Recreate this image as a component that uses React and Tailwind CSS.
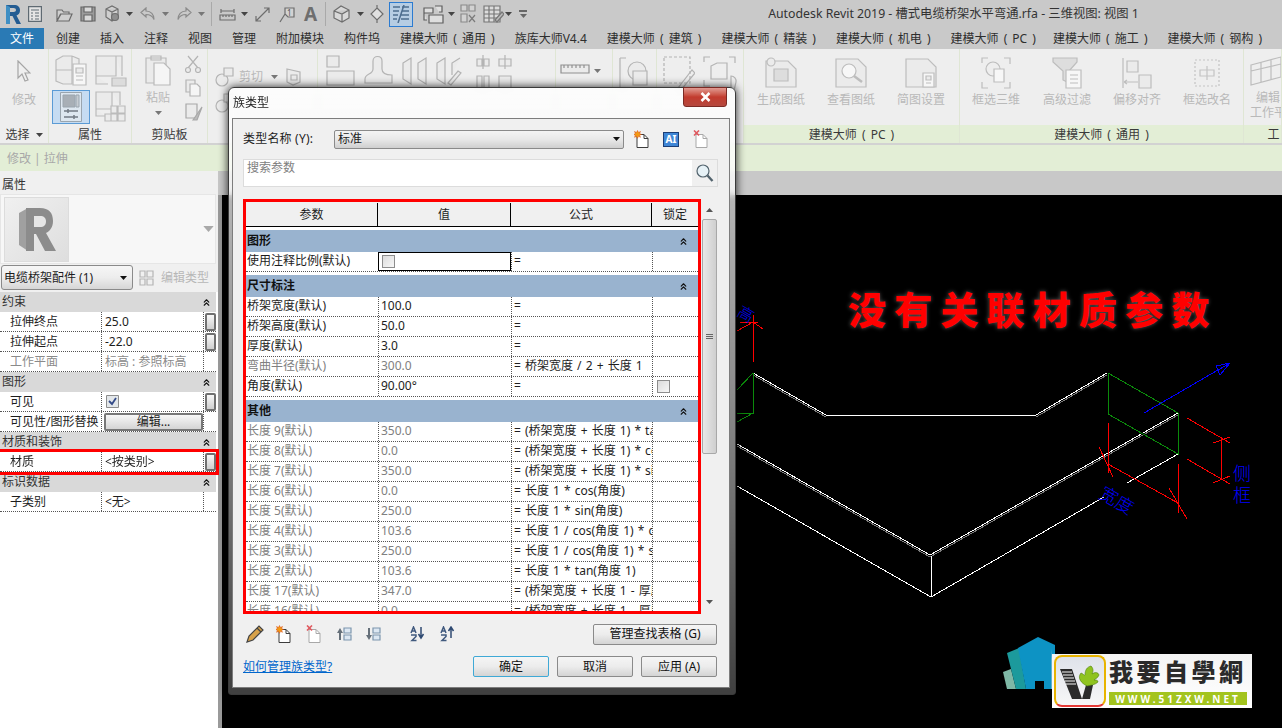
import { ChevronsUp } from "lucide-react"

const TABS = ["创建", "插入", "注释", "视图", "管理", "附加模块", "构件坞", "建模大师 ( 通用 )", "族库大师V4.4", "建模大师 ( 建筑 )", "建模大师 ( 精装 )", "建模大师 ( 机电 )", "建模大师 ( PC )", "建模大师 ( 施工 )", "建模大师 ( 钢构 )"]

const PROP_GROUPS = [
    { title: "约束", rows: [
        { name: "拉伸终点", value: "25.0", btn: true },
        { name: "拉伸起点", value: "-22.0", btn: true },
        { name: "工作平面", value: "标高 : 参照标高", dim: true },
    ] },
    { title: "图形", rows: [
        { name: "可见", check: true, btn: true },
        { name: "可见性/图形替换", edit: true },
    ] },
    { title: "材质和装饰", rows: [{ name: "材质", value: "<按类别>", btn: true, mark: true }] },
    { title: "标识数据", rows: [{ name: "子类别", value: "<无>" }] },
]

const PARAM_GROUPS = [
    { title: "图形", rows: [{ name: "使用注释比例(默认)", box: true, formula: "=" }] },
    { title: "尺寸标注", rows: [
        { name: "桥架宽度(默认)", value: "100.0", formula: "=" },
        { name: "桥架高度(默认)", value: "50.0", formula: "=" },
        { name: "厚度(默认)", value: "3.0", formula: "=" },
        { name: "弯曲半径(默认)", value: "300.0", formula: "= 桥架宽度 / 2 + 长度 1", dim: true },
        { name: "角度(默认)", value: "90.00°", formula: "=", lock: true },
    ] },
    { title: "其他", rows: [
        { name: "长度 9(默认)", value: "350.0", formula: "= (桥架宽度 + 长度 1) * tan(角度)", dim: true },
        { name: "长度 8(默认)", value: "0.0", formula: "= (桥架宽度 + 长度 1) * cos(角度)", dim: true },
        { name: "长度 7(默认)", value: "350.0", formula: "= (桥架宽度 + 长度 1) * sin(角度)", dim: true },
        { name: "长度 6(默认)", value: "0.0", formula: "= 长度 1 * cos(角度)", dim: true },
        { name: "长度 5(默认)", value: "250.0", formula: "= 长度 1 * sin(角度)", dim: true },
        { name: "长度 4(默认)", value: "103.6", formula: "= 长度 1 / cos(角度 1) * cos(角度)", dim: true },
        { name: "长度 3(默认)", value: "250.0", formula: "= 长度 1 / cos(角度 1) * sin(角度)", dim: true },
        { name: "长度 2(默认)", value: "103.6", formula: "= 长度 1 * tan(角度 1)", dim: true },
        { name: "长度 17(默认)", value: "347.0", formula: "= (桥架宽度 + 长度 1 - 厚度)", dim: true },
        { name: "长度 16(默认)", value: "0.0", formula: "= (桥架宽度 + 长度 1 - 厚度)", dim: true },
    ] },
]

function Ic({ w = 32, h = 32, className = "", children, stroke = "#b4b4b4", fill = "#ebebeb" }) {
    return (
        <svg width={w} height={h} viewBox={`0 0 ${w} ${h}`} fill={fill} stroke={stroke} strokeWidth="1.2" className={`shrink-0 ${className}`}>
            {children}
        </svg>
    )
}

function Caret({ color = "#777777", className = "" }) {
    return <svg width="7" height="4" viewBox="0 0 7 4" className={`shrink-0 ${className}`}><path d="M0 0h7L3.5 4z" fill={color} /></svg>
}

function PageIcon({ mark, muted }) {
    return (
        <svg width="16" height="18" viewBox="0 0 16 18" className="shrink-0">
            <path d="M3 4.5h7l4 4v9H3z" fill="#ffffff" stroke={muted ? "#a8a8a8" : "#3d3d3d"} />
            <path d="M10 4.5v4h4" fill="none" stroke={muted ? "#a8a8a8" : "#3d3d3d"} />
            {mark === "new" && <path d="M3.5 0.5l1 2 2-1-1 2 2 1-2 .8 1 2-2-1-1 2-1-2-2 1 1-2-2-.8 2-1-1-2 2 1z" fill="#f39a12" stroke="#d9480f" strokeWidth=".5" />}
            {mark === "del" && <path d="M1 0.5l5 5m0-5l-5 5" fill="none" stroke="#e0595f" strokeWidth="1.6" />}
        </svg>
    )
}

function Qat() {
    return (
        <div className="flex h-7 items-center pl-[5px]">
            <svg width="16" height="21" viewBox="0 0 16 21" className="shrink-0">
                <path d="M1 1h8c4 0 6 2 6 5.500 0 2.500-1.500 4.500-3.500 5L16 20h-4.500L7.500 12H5v8H1z" fill="#245c92" />
                <path d="M1 1l4 2v17H1z" fill="#3f8fc4" />
                <path d="M5 4v4h3.500c1.500 0 2.500-.8 2.500-2s-1-2-2.500-2z" fill="#c8c8c8" />
            </svg>
            <Ic w={14} h={16} className="ml-[7px]" stroke="#5f6a72" fill="#e4e4e4"><path d="M.6.6h12.800v14.800H.6zM3 4h8M3 7h2m2 0h4M3 10h2m2 0h4M3 13h2m2 0h4" /></Ic>
            <Ic w={17} h={15} className="ml-[14px]" stroke="#6b6b6b" fill="#cfcfcf"><path d="M1 3h5l1.500 2H13v2H5L1 14zM1 14l3.500-7H16l-3 7z" /></Ic>
            <Ic w={16} h={16} className="ml-[7px]" stroke="#666666" fill="#9b9b9b"><path d="M1 1h14v14H1z" /><path d="M4 1h8v5H4zM4 9h8v6H4z" fill="#d9d9d9" /></Ic>
            <Ic w={18} h={18} className="ml-[7px]" stroke="#6f6f6f" fill="#cfcfcf"><path d="M3 4l6-3 6 3v8l-6 4-6-4zM3 4l6 3 6-3M9 7v9" /><circle cx="12" cy="12" r="3.500" fill="#8f8f8f" /></Ic>
            <Caret color="#444444" className="ml-[5px]" />
            <Ic w={16} h={14} className="ml-[7px]" stroke="#8b8b8b" fill="none"><path d="M6 1L1 5.500 6 10V7.500c4 0 6.500 1.500 8 5 0-5-3-8.500-8-8.500z" /></Ic>
            <Caret color="#777777" className="ml-[6px]" />
            <Ic w={16} h={14} className="ml-[7px]" stroke="#8b8b8b" fill="none"><path d="M10 1l5 4.500L10 10V7.500c-4 0-6.500 1.500-8 5 0-5 3-8.500 8-8.500z" /></Ic>
            <Caret color="#777777" className="ml-[6px]" />
            <div className="ml-[6px] h-6 w-px bg-[#a9a9a9]" />
            <Ic w={17} h={13} className="ml-[7px]" stroke="#6d6d6d" fill="none"><path d="M2 1v4M15 1v4M2 3h13M1 7h15v5H1zM4 7v2M7 7v2M10 7v2M13 7v2" /></Ic>
            <Caret color="#444444" className="ml-[5px]" />
            <Ic w={15} h={15} className="ml-[7px]" stroke="#6d6d6d" fill="none"><path d="M1 14L14 1M9 1h5v5M1 9v5h5" /></Ic>
            <Ic w={17} h={17} className="ml-[9px]" stroke="#6d6d6d" fill="#d2d2d2"><path d="M6 2h9v9H9l-3-3zM1 16l5-8" /><text x="8" y="10" fontSize="8" fill="#555555" stroke="none">1</text></Ic>
            <span className="ml-[8px] text-[19px] leading-none font-bold text-[#6e6e6e]">A</span>
            <div className="ml-[8px] h-6 w-px bg-[#a9a9a9]" />
            <Ic w={19} h={18} className="ml-[6px]" stroke="#6d6d6d" fill="#d8d8d8"><path d="M2 6l7-5 8 4v8l-7 4-8-4zM2 6l8 3 7-4M10 9v8" /></Ic>
            <Caret color="#444444" className="ml-[6px]" />
            <Ic w={16} h={18} className="ml-[5px]" stroke="#6d6d6d" fill="#e0e0e0"><path d="M8 3l6 6-6 6-6-6zM8 0v3M8 15v3" /></Ic>
            <div className="ml-[4px] flex h-[25px] w-[24px] shrink-0 items-center justify-center border border-[#2b7bd1] bg-[#b6cde3]">
                <svg width="18" height="18" viewBox="0 0 18 18" fill="none" stroke="#4d6d8e" strokeWidth="1.500"><path d="M1 2h7M1 6h6M1 10h5M1 14h4M10 2h7M10 6h7M9 10h8M9 14h8M12 0L6 18" /></svg>
            </div>
            <Ic w={21} h={20} className="ml-[10px]" stroke="#5e5e5e" fill="#dedede"><path d="M1 4h9v5H1zM6 11h14v8H6zM12 2h7v6h-3M1 9v7h3" /></Ic>
            <Caret color="#444444" className="ml-[4px]" />
            <Ic w={16} h={20} className="ml-[5px]" stroke="#8a8a8a" fill="#d2d2d2"><path d="M1 1h6v6H1zM9 1h6v6H9zM1 10h6v8H1z" /><path d="M9 11l6 7m0-7l-6 7" stroke="#7b7b7b" /></Ic>
            <Ic w={21} h={20} className="ml-[7px]" stroke="#777777" fill="#dcdcdc"><path d="M1 2h16v16H1zM1 6h16M1 10h16M1 14h16M6 2v16M11 2v16" /><path d="M12 16l7-8 2 2-7 8z" fill="#bbbbbb" /></Ic>
            <Caret color="#444444" className="ml-[1px]" />
            <div className="ml-[7px] flex flex-col items-center gap-[2px]">
                <div className="h-[2px] w-2 bg-[#666666]" />
                <Caret color="#666666" />
            </div>
            <span className="ml-[241px] text-[12.300px] whitespace-nowrap text-[#333333]">Autodesk Revit 2019 - 槽式电缆桥架水平弯通.rfa - 三维视图: 视图 1</span>
        </div>
    )
}

function Tabs() {
    return (
        <div className="flex h-[21px] items-center gap-[20px] overflow-hidden text-[12px] [word-spacing:2px] whitespace-nowrap text-[#2e2e2e]">
            <div className="mr-[-8px] flex h-full w-[44px] shrink-0 items-center justify-center bg-[#2a7ab5] text-white">文件</div>
            {TABS.map(t => <span key={t} className={`shrink-0 ${t.includes("PC") ? "mr-[-3px]" : ""}`}>{t}</span>)}
        </div>
    )
}

function Tool({ label, children, w = "w-[70px]" }) {
    return (
        <div className={`flex ${w} shrink-0 flex-col items-center pt-[8px] text-[12px] text-[#b9b9b9]`}>
            <div className="flex h-[32px] items-center justify-center">{children}</div>
            <span className="mt-[2px] whitespace-nowrap">{label}</span>
        </div>
    )
}

function Group({ w, label, green, children, labelColor = "text-[#3a3a3a]" }) {
    return (
        <div className={`flex ${w} shrink-0 flex-col border-r border-[#dfe6d4]`}>
            <div className="flex h-[76px] overflow-hidden">{children}</div>
            <div className={`flex h-[18px] items-center justify-center overflow-hidden pt-[1px] text-[12px] [word-spacing:2px] whitespace-nowrap ${labelColor} ${green ? "bg-[#e3eed6]" : ""}`}>{label}</div>
        </div>
    )
}

function Ribbon() {
    return (
        <div className="flex h-[96px] overflow-hidden border-b-2 border-[#d2d2d2] bg-[#eeeeee]">
            <Group w="w-[49px]" label={<span className="flex items-center gap-[6px]">选择<Caret color="#444444" /></span>}>
                <div className="flex w-full flex-col items-center pt-[11px] text-[12px] text-[#b9b9b9]">
                    <Ic w={14} h={22} stroke="#a5a5a5" fill="#efefef"><path d="M1 1l12 12H8l3 7-3 1-3-7-4 4z" /></Ic>
                    <span className="mt-[9px]">修改</span>
                </div>
            </Group>
            <Group w="w-[83px]" label="属性">
                <div className="grid grid-cols-[46px_36px] content-start pt-[4px]">
                    <Ic w={32} h={33} className="ml-[6px] mt-[1px]" stroke="#bbbbbb"><path d="M1 6l7-4h9v28H8l-7-3zM1 16h16M17 2l7 3v10" /><path d="M18 10h13v21H18z" fill="#f7f7f7" /><path d="M21 14h7v5h-7zM21 22h7M21 26h7" /></Ic>
                    <Ic w={32} h={33} className="mt-[1px]" stroke="#bbbbbb"><path d="M1 2h20v20H1zM21 2h6v20M1 22v8h12" /><path d="M17 24h14v8H17z" fill="#dcdcdc" /></Ic>
                    <div className="ml-[3px] mt-[3px] flex h-[34px] w-[38px] items-center justify-center border border-[#5b9bd5] bg-[#c6dcf2]">
                        <svg width="22" height="30" viewBox="0 0 22 30" fill="#dde7f0" stroke="#9aa5ae"><path d="M.5.5h21v29H.5z" /><path d="M3 3h12v12H3z" fill="#a8afb6" /><path d="M16 3h3v12h-3z" fill="#c6ccd2" /><path d="M4 19h14M4 25h14M8 17v4M14 23v4" stroke="#727b84" strokeWidth="1.500" /></svg>
                    </div>
                    <Ic w={32} h={33} className="mt-[3px]" stroke="#bbbbbb"><path d="M1 2h16v17H1zM17 2h8v13M1 19v7h9" /><path d="M16 16h6v7h-6zM23 16h7v7h-7zM16 24h6v7h-6zM23 24h7v7h-7zM10 24h6v7h-6z" /></Ic>
                </div>
            </Group>
            <Group w="w-[76px]" label="剪贴板">
                <div className="flex flex-col items-center pl-[13px] pt-[6px] text-[12px] text-[#b9b9b9]">
                    <Ic w={26} h={32} stroke="#b9b9b9"><path d="M1 3h20v25H1zM6 1h10v4H6z" /><path d="M9 8h10l6 6v16H9z" fill="#f5f5f5" /></Ic>
                    <span className="mt-[4px] leading-[14px]">粘贴</span>
                    <Caret className="mt-[6px]" />
                </div>
                <div className="ml-[14px] flex flex-col gap-[6px] pt-[6px]">
                    <Ic w={16} h={18} stroke="#b4b4b4"><path d="M3 1l10 12M13 1L3 13" /><circle cx="3" cy="15" r="2.500" /><circle cx="13" cy="15" r="2.500" /></Ic>
                    <Ic w={16} h={18} stroke="#b4b4b4"><path d="M1 1h9v12H1z" /><path d="M5 5h7l3 3v9H5z" fill="#f5f5f5" /></Ic>
                    <Ic w={18} h={18} stroke="#a8a8a8"><path d="M1 1h11v14H1z" /><path d="M8 17l9-13-5 13z" fill="#bcbcbc" /></Ic>
                </div>
            </Group>
            <Group w="w-[110px]" label="">
                <div className="flex flex-col gap-[6px] pl-[7px] pt-[18px] text-[12px] text-[#b9b9b9]">
                    <div className="flex items-center gap-[2px]">
                        <Ic w={20} h={20} stroke="#b4b4b4"><circle cx="7" cy="13" r="6" /><path d="M9 1h9v8H9z" /></Ic>
                        <span className="ml-[2px]">剪切</span>
                        <Caret className="ml-[6px]" />
                        <Ic w={16} h={18} className="ml-[6px]" stroke="#b4b4b4"><path d="M1 1l13 3v10l-7 3-6-3z" /><path d="M5 7h6v5H5z" /></Ic>
                    </div>
                    <Ic w={20} h={20} stroke="#b4b4b4"><circle cx="7" cy="13" r="6" /><path d="M9 1h9v8H9z" /></Ic>
                </div>
            </Group>
            <Group w="w-[238px]" label="">
                <div className="flex items-start gap-[8px] pl-[8px] pt-[6px]">
                    <Ic w={30} h={32} stroke="#b4b4b4"><path d="M1 1h12v11H1zM1 16h27v14H1z" /></Ic>
                    <Ic w={30} h={32} stroke="#b4b4b4"><path d="M1 24c0-6 8-4 8-10V6c0-6 9-6 9 0v8c0 4 3 6 10 6v8H1z" /></Ic>
                    <Ic w={26} h={32} stroke="#b4b4b4"><path d="M1 8l8-5v26l-8-5zM24 3v26l-8-5V8z" /></Ic>
                    <Ic w={26} h={32} stroke="#b4b4b4"><path d="M1 8l8-5v26l-8-5zM24 3l-8 5v12" /><path d="M12 28l10-12 3 2-10 12z" /></Ic>
                    <div className="ml-[6px] flex flex-col gap-[6px]">
                        <Ic w={14} h={14} stroke="#b4b4b4"><path d="M1 4h5v7H1zM8 4h5v7H8zM7 0v14" /></Ic>
                        <Ic w={14} h={14} stroke="#b4b4b4"><path d="M1 1h5v12H1zM8 1h5v12H8z" /></Ic>
                    </div>
                    <div className="flex flex-col gap-[6px]">
                        <Ic w={14} h={14} stroke="#b4b4b4"><path d="M1 4h12v7H1zM7 0v14" /></Ic>
                        <Ic w={14} h={14} stroke="#b4b4b4"><path d="M1 1h12v12H1z" /></Ic>
                    </div>
                </div>
            </Group>
            <Group w="w-[57px]" label="">
                <div className="flex items-start gap-[4px] pl-[4px] pt-[12px]">
                    <Ic w={30} h={18} stroke="#909090"><path d="M1 4h28v8H1zM4 4v3M8 4v3M12 4v3M16 4v3M20 4v3M24 4v3" /></Ic>
                    <Caret className="mt-[8px]" />
                </div>
            </Group>
            <Group w="w-[44px]" label="">
                <div className="flex pl-[6px] pt-[8px]"><Ic w={34} h={36} stroke="#b4b4b4"><path d="M1 1h6M1 1v30h6" /><circle cx="18" cy="14" r="9" /><path d="M14 14h14v14H14z" /></Ic></div>
            </Group>
            <Group w="w-[87px]" label="">
                <div className="flex items-start gap-[8px] pl-[6px] pt-[7px]">
                    <Ic w={32} h={36} stroke="#b4b4b4" fill="none"><path d="M1 1h26v26H1z" strokeDasharray="3 2" /><path d="M15 32l14-18 3 3-14 17z" /></Ic>
                    <Ic w={36} h={36} stroke="#b4b4b4" fill="none"><path d="M1 6V1h6M26 1h6v6M1 24v6h6" /><path d="M8 10l6-3h10v16H8z" /><path d="M28 20a5 5 0 0 1 5 6l-2 9h-3z" /></Ic>
                </div>
            </Group>
            <Group w="w-[216px]" label="建模大师 ( PC )" green>
                <div className="flex pl-[2px]">
                    <Tool label="生成图纸">
                        <Ic w={32} h={32} stroke="#bdbdbd"><path d="M1 4h22l8 8v18H1z" /><path d="M9 12h14v12H9z" fill="#dddddd" /><circle cx="6" cy="5" r="4" /></Ic>
                    </Tool>
                    <Tool label="查看图纸">
                        <Ic w={32} h={32} stroke="#bdbdbd"><path d="M1 2h22l8 8v20H1z" /><circle cx="14" cy="14" r="7" fill="#f7f7f7" /><path d="M19 19l8 6" strokeWidth="2.500" /></Ic>
                    </Tool>
                    <Tool label="简图设置">
                        <Ic w={32} h={32} stroke="#bdbdbd"><path d="M1 2h22l8 8v20H1z" /><path d="M18 16h11v14H18z" fill="#f7f7f7" /><path d="M21 19h5v4h-5zM21 26h5" /></Ic>
                    </Tool>
                </div>
            </Group>
            <Group w="w-[284px]" label="建模大师 ( 通用 )" green>
                <Tool label="框选三维" w="w-[72px]">
                    <Ic w={30} h={32} stroke="#bdbdbd" fill="none"><path d="M1 6V1h6M23 1h6v6M1 25v6h6M23 31h6v-6" /><circle cx="12" cy="12" r="7" /><path d="M13 12h10v13H13z" fill="#f7f7f7" /></Ic>
                </Tool>
                <Tool label="高级过滤">
                    <Ic w={30} h={32} stroke="#bdbdbd"><path d="M1 1h24v4l-8 9v12l-6-3v-9L1 5z" fill="#dddddd" /><path d="M14 13h15v18H14zM18 18h8M18 22h8M18 26h8" fill="#f7f7f7" /></Ic>
                </Tool>
                <Tool label="偏移对齐">
                    <Ic w={30} h={32} stroke="#bdbdbd"><path d="M1 1v30" /><path d="M5 4h11v11H5zM17 18h12v13H17z" /><path d="M2 25h14M2 25l3-2m-3 2l3 2" fill="none" /></Ic>
                </Tool>
                <Tool label="框选改名">
                    <Ic w={26} h={28} stroke="#c4c4c4" fill="none"><path d="M1 1h24v26H1z" strokeDasharray="2 2" /><path d="M6 11h14v6H6zM13 7v14" /></Ic>
                </Tool>
            </Group>
            <Group w="w-[38px]" label={<span className="ml-[22px]">工</span>} green>
                <div className="flex flex-col items-start pl-[6px] pt-[6px] text-[12px] whitespace-nowrap text-[#b9b9b9]">
                    <Ic w={32} h={32} stroke="#bdbdbd" fill="none"><path d="M1 10l30-8v20l-30 8zM11 7v21M21 5v20M1 16l30-7" /></Ic>
                    <span className="mt-[4px] ml-[6px] leading-[14px]">编辑</span>
                    <span className="leading-[15px]">工作平</span>
                </div>
            </Group>
        </div>
    )
}

function SmallButton() {
    return <div className="mx-auto h-[18px] w-[11px] rounded-[2px] border-2 border-[#707070] bg-linear-to-b from-[#f8f8f8] to-[#cfcfcf]" />
}

function Properties() {
    return (
        <aside className="flex w-[218px] shrink-0 flex-col bg-white text-[12px] text-[#1d1d1d]">
            <div className="bg-[#f0f0f0] pb-[2px]">
                <div className="flex h-[23px] items-center pl-[2px] pt-[4px] text-[#333333]">属性</div>
                <div className="flex h-[70px] w-[216px] items-center border border-[#e6e6e6] bg-[#f7f7f7] pl-[3px]">
                    <div className="flex h-[65px] w-[65px] items-center justify-center border border-[#dcdcdc] bg-linear-to-br from-[#f0f0f0] to-[#dedede]">
                        <svg width="40" height="48" viewBox="0 0 40 48">
                            <path d="M2 8l9-5v43l-9-6z" fill="#a0a0a0" />
                            <path d="M9 3h14c9 0 13 5 13 13 0 6-3 10-7 12l10 18H28l-9-17h-2v17H9z" fill="#8c8c8c" />
                            <path d="M17 11v11h6c4 0 6-2 6-5.500S27 11 23 11z" fill="#e6e6e6" />
                        </svg>
                    </div>
                    <Caret color="#a9a9a9" className="ml-auto mr-[3px] scale-150" />
                </div>
                <div className="mt-[1px] flex h-[25px] items-center pl-[1px]">
                    <div className="flex h-[25px] w-[132px] items-center justify-between rounded-[3px] border border-[#8a8a8a] bg-linear-to-b from-[#f6f6f6] via-[#ededed] to-[#d6d6d6] px-[2px]">
                        <span className="whitespace-nowrap">电缆桥架配件 (1)</span>
                        <Caret color="#111111" className="mr-[3px]" />
                    </div>
                    <Ic w={16} h={16} className="ml-[6px]" stroke="#b5b5b5" fill="none"><path d="M1 1h5v6H1zM8 1h6v6H8zM1 9h5v6H1zM8 9h6v6H8z" /></Ic>
                    <span className="ml-[6px] whitespace-nowrap text-[#b7b7b7]">编辑类型</span>
                </div>
            </div>
            {PROP_GROUPS.map(g => (
                <div key={g.title}>
                    <div className="flex h-[20px] w-[216px] items-center justify-between bg-[#d9d9d9] pl-[2px] pr-[4px] text-[#333333]">
                        {g.title}
                        <ChevronsUp size={11} strokeWidth={2.5} className="text-[#111111]" />
                    </div>
                    {g.rows.map(r => (
                        <div key={r.name} className={`relative grid h-[20px] w-[216px] grid-cols-[101px_102px_13px] items-center border-b border-dotted border-[#555555] leading-[19px] ${r.mark ? "z-10 ring-[3px] ring-[#ff0000]" : ""}`}>
                            <span className={`pl-[10px] whitespace-nowrap ${r.dim ? "text-[#8a8a8a]" : ""}`}>{r.name}</span>
                            <div className={`flex h-full items-center border-l border-dotted border-[#555555] pl-[3px] whitespace-nowrap ${r.dim ? "text-[#8a8a8a]" : ""}`}>
                                {r.value}
                                {r.check && (
                                    <svg width="13" height="13" viewBox="0 0 13 13" className="ml-[1px]"><path d="M.5.500h12v12H.5z" fill="#e3e7ea" stroke="#8d8d8d" /><path d="M3 6l3 3 4-6" fill="none" stroke="#344a88" strokeWidth="1.800" /></svg>
                                )}
                                {r.edit && (
                                    <div className="ml-[-1px] flex h-[18px] w-[100px] items-center justify-center rounded-[2px] border-2 border-[#777777] bg-linear-to-b from-[#f7f7f7] to-[#d4d4d4]">编辑...</div>
                                )}
                            </div>
                            <div className="flex h-full items-center border-l border-dotted border-[#555555]">
                                {r.btn && <SmallButton />}
                            </div>
                        </div>
                    ))}
                </div>
            ))}
        </aside>
    )
}

function Canvas() {
    return (
        <div className="relative h-[533px] flex-1 overflow-hidden bg-black">
            <svg viewBox="222 195 1060 533" className="absolute inset-0 h-full w-full" fill="none" shapeRendering="crispEdges">
                <g stroke="#7a7a7a" strokeWidth="1">
                    <path d="M753 375L826 417M1036 417L1107 375M737 446L930 557L1178 415" />
                </g>
                <g stroke="#ffffff" strokeWidth="1">
                    <path d="M753 373L826 415H1036L1107 373M737 444L930 555L1178 413" />
                    <path d="M737 486L931 597L1104 497M1127 483L1178 454M931 556V597" />
                </g>
                <g stroke="#0b8a0b" strokeWidth="1">
                    <path d="M1108 373V414L1178 454V413L1108 373M753 373V413H737M753 373L737 390M753 413L737 422" />
                </g>
                <g stroke="#0000ff" strokeWidth="1">
                    <path d="M1144 413L1230 363L1216 366L1220 375L1230 363" />
                </g>
                <g stroke="#ff0000" strokeWidth="1">
                    <path d="M753 315V362M737 331L753 322L763 329M740 322L758 322" />
                    <path d="M1108 423V473M1178 464V513M1108 464L1178 503M1099 447L1113 477M1169 488L1187 519" />
                    <path d="M1187 418L1230 443M1187 459L1230 484M1221 437V479M1213 443L1230 437M1213 483L1230 476" />
                </g>
                <g fill="#0000ff" fontSize="18" fontWeight="300">
                    <text transform="translate(1098 497) rotate(30)">宽度</text>
                    <text x="1233" y="480">侧</text>
                    <text x="1233" y="502">框</text>
                    <text transform="translate(736 315) rotate(30)" fontSize="16">高</text>
                </g>
            </svg>
            <div className="absolute left-[626px] top-[92px] text-[38px] leading-[44px] font-black tracking-[8.200px] whitespace-nowrap text-[#ff0000] [text-shadow:0_0_4px_rgba(255,255,255,.35)]">没有关联材质参数</div>
            <Logo />
        </div>
    )
}

function Logo() {
    return (
        <div className="absolute left-[781px] top-[442px] flex items-start">
            <svg width="52" height="54" viewBox="0 0 52 54" className="mr-[-3px] shrink-0">
                <path d="M0 35l8-3 5 20H4z" fill="#7fb8a6" />
                <path d="M4 16l12-5 7 41H13z" fill="#1c9a9c" />
                <path d="M15 11L35 0l19 9-6 43h-7v-8h-9v8h-9z" fill="#0d93c4" />
                <path d="M48 12l4 40h-4z" fill="#5fb2d1" />
            </svg>
            <div className="relative mt-[17px] flex h-[54px] w-[200px] items-start bg-linear-to-b from-[#f4f4f4] to-white pl-[2px] pt-[1px]">
                <div className="flex h-[52px] w-[52px] shrink-0 items-center justify-center rounded-[8px] border-2 border-[#e8b400] border-b-[#e53935] bg-linear-to-b from-[#dfe2ea] to-[#f7f7f7]">
                    <svg width="42" height="42" viewBox="0 0 42 42">
                        <path d="M1 9h12l10 30h-10z" fill="#2b2b2b" />
                        <path d="M3 12h10M4 15h10M5 18h10M6 21h10M7 24h10" stroke="#f5f5f5" strokeWidth="1.200" />
                        <path d="M23 39l4-14h7l-3 14z" fill="#2b2b2b" />
                        <path d="M28 26c-6-3-10-8-6-13 3 1 3 3 4 2 0-5 2-8 6-9 3 3 2 6 1 8 3-2 6-2 7 1-1 3-4 4-5 5 2 0 4 0 4 2-3 3-7 3-11 4z" fill="#8fc31f" stroke="#4f7d0f" strokeWidth=".6" />
                    </svg>
                </div>
                <div className="ml-[3px] flex flex-col pt-[4px]">
                    <span className="text-[24px] leading-[26px] font-black tracking-[3.500px] whitespace-nowrap text-[#2a2a2a]">我要自學網</span>
                    <span className="mt-[7px] flex h-[13px] w-[138px] items-center justify-center bg-[#a3c41e] text-[10px] leading-none font-bold tracking-[3px] whitespace-nowrap text-white">WWW.51ZXW.NET</span>
                </div>
            </div>
        </div>
    )
}

function Btn({ children, className = "", primary }) {
    return (
        <div className={`flex h-[21px] items-center justify-center rounded-[2px] border bg-linear-to-b from-[#f5f5f5] via-[#ececec] to-[#d4d4d4] text-[12px] whitespace-nowrap text-[#111111] ${primary ? "border-[#3fa9d6] from-[#eaf4f8] to-[#c9d7de]" : "border-[#8a8a8a]"} ${className}`}>
            {children}
        </div>
    )
}

function Checkbox() {
    return <span className="block h-[13px] w-[13px] border border-[#8d8d8d] bg-linear-to-br from-[#dcdcdc] to-[#f7f7f7]" />
}

function ParamTable() {
    return (
        <div className="h-[415px] w-[458px] shrink-0 overflow-hidden border-[3px] border-[#ff0000] bg-white text-[12px] text-[#1d1d1d]">
            <div className="grid h-[25px] grid-cols-[132px_133px_141px_46px] border-b border-black bg-[#f0f0f0] pt-[1px]">
                {["参数", "值", "公式", "锁定"].map((h, i) => (
                    <div key={h} className={`flex items-center justify-center ${i < 3 ? "border-r border-black" : ""}`}>{h}</div>
                ))}
            </div>
            <div className="w-[452px]">
                {PARAM_GROUPS.map(g => (
                    <div key={g.title}>
                        <div className="mt-[3px] flex h-[22px] items-center justify-between bg-[#99b3cf] pl-[1px] pr-[9px] font-bold text-[#111111]">
                            {g.title}
                            <ChevronsUp size={11} strokeWidth={2.5} className="text-[#111111]" />
                        </div>
                        {g.rows.map(r => (
                            <div key={r.name} className="grid h-[20px] grid-cols-[132px_133px_141px_46px] border-b border-dotted border-[#555555] leading-[17px]">
                                <span className={`pl-[1px] whitespace-nowrap ${r.dim ? "text-[#808080]" : ""}`}>{r.name}</span>
                                <div className={`h-full border-l border-dotted border-[#555555] pl-[2px] whitespace-nowrap ${r.dim ? "text-[#808080]" : ""} ${r.box ? "flex items-center border border-solid border-black pl-[3px]" : ""}`}>
                                    {r.value}
                                    {r.box && <Checkbox />}
                                </div>
                                <div className="h-full overflow-hidden border-l border-dotted border-[#555555] pl-[2px] [word-spacing:1px] whitespace-nowrap">{r.formula}</div>
                                <div className="flex h-full items-center border-l border-dotted border-[#555555] pl-[4px]">
                                    {r.lock && <Checkbox />}
                                </div>
                            </div>
                        ))}
                    </div>
                ))}
            </div>
        </div>
    )
}

function Scrollbar() {
    return (
        <div className="flex h-[410px] w-[17px] shrink-0 flex-col items-center bg-[#f0f0f0] pt-[2px]">
            <div className="flex h-[18px] items-center"><svg width="7" height="4" viewBox="0 0 7 4"><path d="M0 4h7L3.500 0z" fill="#555555" /></svg></div>
            <div className="flex h-[235px] w-[15px] flex-col items-center justify-center gap-[1px] rounded-[2px] border border-[#a8a8a8] bg-linear-to-r from-[#e8e8e8] to-[#cfcfcf]">
                <div className="h-px w-[7px] bg-[#666666]" /><div className="h-px w-[7px] bg-[#666666]" /><div className="h-px w-[7px] bg-[#666666]" />
            </div>
            <div className="mt-auto flex h-[14px] items-center"><Caret color="#555555" /></div>
        </div>
    )
}

function SortIcon({ className, arrow }) {
    return (
        <svg width="16" height="16" viewBox="0 0 16 16" className={`shrink-0 ${className}`}>
            <path d="M1 7l2.500-6L6 7M2 5h3M1 9h5v1.500L2 14.500h4.500" fill="none" stroke="#40597e" strokeWidth="1.500" />
            <path d={arrow} fill="none" stroke="#2f4a72" strokeWidth="1.500" />
        </svg>
    )
}

function Dialog() {
    return (
        <div className="absolute left-[228px] top-[87px] flex h-[608px] w-[508px] flex-col rounded-t-[6px] rounded-b-[3px] border border-[#3a3a3a] bg-linear-to-b from-white/80 via-white/55 to-white/25 pl-[3px] pr-[5px] pb-[6px] text-[12px] text-[#1d1d1d] shadow-[0_0_10px_rgba(0,0,0,.85)] backdrop-blur-[3px]">
            <div className="relative flex h-[30px] shrink-0 items-center pb-[1px] pl-[1px] text-[#222222]">
                族类型
                <div className="absolute right-[3px] top-[-1px] flex h-[20px] w-[44px] items-center justify-center rounded-b-[3px] border border-[#7b2a24] bg-linear-to-b from-[#e09a92] via-[#c23b2e] to-[#b5483e]">
                    <svg width="11" height="10" viewBox="0 0 11 10"><path d="M1.500 1l8 8m0-8l-8 8" stroke="#ffffff" strokeWidth="2.500" /></svg>
                </div>
            </div>
            <div className="flex flex-1 flex-col border border-[#7d7d7d] bg-[#f0f0f0] pl-[10px] pr-[12px]">
                <div className="flex h-[40px] shrink-0 items-center">
                    <span className="w-[91px] tracking-[.2px] whitespace-nowrap">类型名称 (Y):</span>
                    <div className="flex h-[19px] w-[290px] shrink-0 items-center justify-between rounded-[2px] border border-[#8a8a8a] bg-linear-to-b from-[#f4f4f4] via-[#e8e8e8] to-[#cfcfcf] pl-[3px] pr-[3px]">
                        标准
                        <Caret color="#111111" />
                    </div>
                    <div className="ml-[10px]"><PageIcon mark="new" /></div>
                    <div className="ml-[13px] flex h-[15px] w-[16px] shrink-0 items-center justify-center border border-[#1b3e77] bg-[#3f86d6] text-[10px] leading-none font-bold text-white">AI</div>
                    <div className="ml-[14px]"><PageIcon mark="del" muted /></div>
                </div>
                <div className="flex h-[28px] w-[475px] shrink-0 border border-[#dcdcdc] bg-white">
                    <span className="flex-1 pl-[3px] leading-[15px] text-[#808080]">搜索参数</span>
                    <div className="flex w-[25px] items-center justify-center bg-[#f0f0f0]">
                        <svg width="18" height="19" viewBox="0 0 18 19" fill="none"><circle cx="7" cy="7" r="6" fill="#e6f1f6" stroke="#52636d" strokeWidth="1.200" /><path d="M11.500 11.500L16.500 17" stroke="#52636d" strokeWidth="2.400" /></svg>
                    </div>
                </div>
                <div className="mt-[12px] flex items-start">
                    <ParamTable />
                    <Scrollbar />
                </div>
                <div className="mt-[9px] flex h-[22px] shrink-0 items-center">
                    <Ic w={18} h={18} className="ml-[3px]" stroke="#444444" fill="#d8a24a"><path d="M1 17l2-6L13 1l4 4L7 15z" /><path d="M11 3l4 4" /></Ic>
                    <div className="ml-[12px]"><PageIcon mark="new" /></div>
                    <div className="ml-[14px]"><PageIcon mark="del" muted /></div>
                    <Ic w={16} h={14} className="ml-[14px]" stroke="#7d96ad" fill="#dce7f2"><path d="M8 1h7v5H8zM8 8h7v5H8z" /><path d="M4 1L1 6h2v7h2V6h2z" fill="#66707a" stroke="none" /></Ic>
                    <Ic w={16} h={14} className="ml-[13px]" stroke="#7d96ad" fill="#dce7f2"><path d="M8 1h7v5H8zM8 8h7v5H8z" /><path d="M4 13L1 8h2V1h2v7h2z" fill="#66707a" stroke="none" /></Ic>
                    <SortIcon className="ml-[29px]" arrow="M11 1v10M8.500 8l2.500 4 2.500-4" />
                    <SortIcon className="ml-[14px]" arrow="M11 12V2M8.500 5L11 1l2.500 4" />
                    <Btn className="ml-auto w-[124px]">管理查找表格 (G)</Btn>
                </div>
                <div className="mt-[11px] flex h-[21px] shrink-0 items-center">
                    <span className="text-[12px] whitespace-nowrap text-[#0066cc] underline">如何管理族类型?</span>
                    <Btn primary className="ml-auto w-[76px]">确定</Btn>
                    <Btn className="ml-[8px] w-[76px]">取消</Btn>
                    <Btn className="ml-[8px] w-[76px]">应用 (A)</Btn>
                </div>
            </div>
        </div>
    )
}

export default function App() {
    return (
        <div className="relative h-[728px] w-[1282px] overflow-hidden bg-white font-['Noto_Sans','Noto_Sans_CJK_SC',sans-serif]">
            <div className="bg-[#c9c9c9]">
                <Qat />
                <Tabs />
            </div>
            <Ribbon />
            <div className="flex h-[26px] items-center bg-[#e3eed6] pl-[7px] pt-[1px] text-[12px] text-[#a8a8a8]">修改 | 拉伸</div>
            <div className="flex">
                <Properties />
                <div className="flex flex-1 flex-col">
                    <div className="h-[24px] bg-[#c8c8c8]" />
                    <div className="flex">
                        <div className="w-[4px] shrink-0 bg-[#9a9a9a]" />
                        <Canvas />
                    </div>
                </div>
            </div>
            <Dialog />
        </div>
    )
}
